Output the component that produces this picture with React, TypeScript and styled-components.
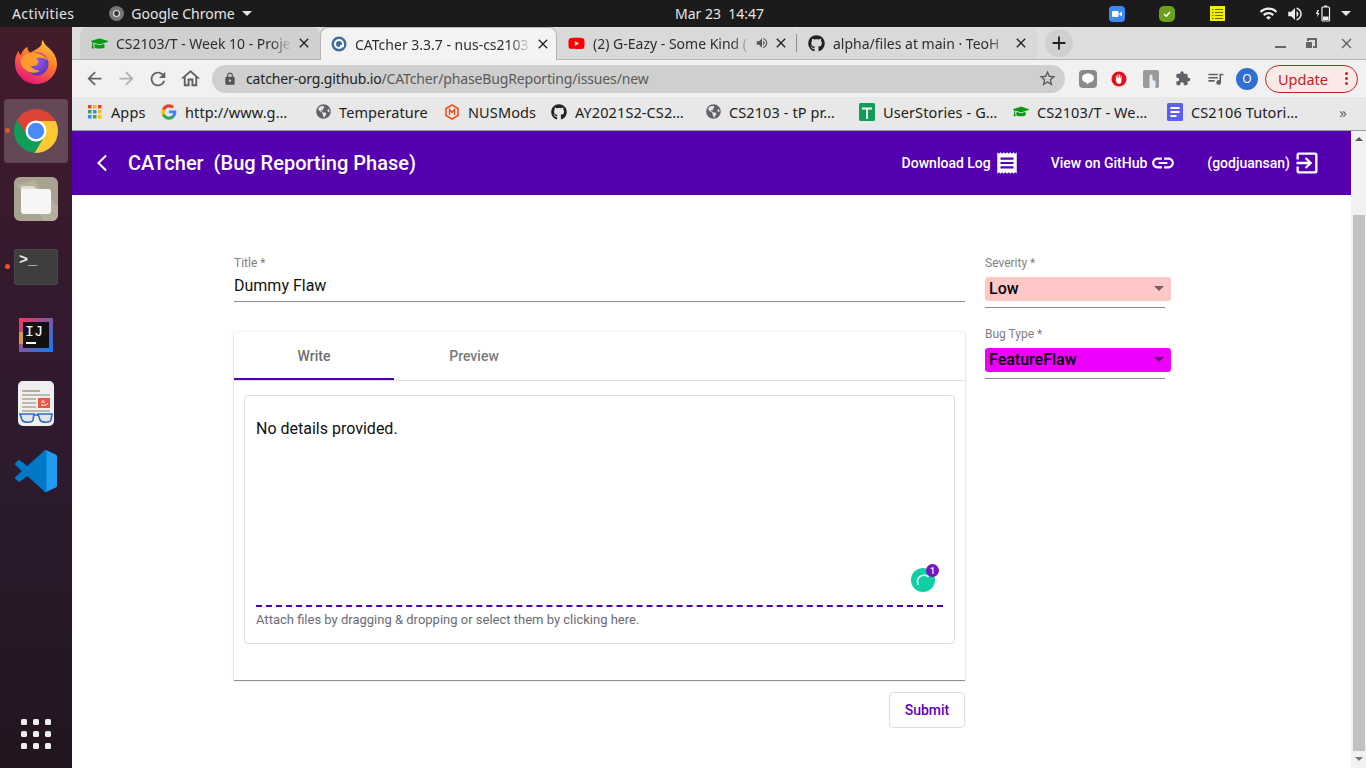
import styled, { createGlobalStyle } from 'styled-components'
import { FaGithub, FaGlobeAmericas, FaGraduationCap, FaYoutube } from 'react-icons/fa'
import {
  MdAdd,
  MdArrowBack,
  MdArrowBackIosNew,
  MdArrowDropDown,
  MdArrowForward,
  MdClose,
  MdExitToApp,
  MdExtension,
  MdLink,
  MdLock,
  MdOutlineHome,
  MdQueueMusic,
  MdReceipt,
  MdRefresh,
  MdStarBorder,
  MdVolumeUp,
  MdWifi,
} from 'react-icons/md'
import type { ReactNode } from 'react'

const PURPLE = '#5500b0'
const UI_FONT = '"Noto Sans", "Open Sans", sans-serif'
const APP_FONT = 'Roboto, "Liberation Sans", sans-serif'

const GlobalStyle = createGlobalStyle`
  html, body {
    margin: 0;
    padding: 0;
    height: 768px;
    overflow: hidden;
    background: #fff;
  }
  * { box-sizing: border-box; }
`

const Screen = styled.div`
  width: 1366px;
  height: 768px;
  display: flex;
  flex-direction: column;
  overflow: hidden;
  font-family: ${UI_FONT};
`

/* gnome top bar */
const TopBar = styled.div`
  height: 27px;
  flex: none;
  background: #1b1b1b;
  color: #e6e6e6;
  font-size: 14px;
  display: grid;
  grid-template-columns: 1fr auto 1fr;
  align-items: center;
  padding: 0 11px 0 12px;
`
const TopLeft = styled.div`
  display: flex;
  align-items: center;
`
const Activities = styled.span`
  letter-spacing: 0.4px;
`
const AppMenu = styled.div`
  display: flex;
  align-items: center;
  margin-left: 35px;
  gap: 7px;
`
const Clock = styled.div`
  white-space: pre;
  padding-left: 72px;
`
const Tray = styled.div`
  display: flex;
  align-items: center;
  justify-content: flex-end;
`
const TraySlot = styled.span<{ $w: number; $after?: number }>`
  width: ${p => p.$w}px;
  margin-right: ${p => p.$after ?? 0}px;
  display: flex;
  justify-content: center;
  align-items: center;
`
const Caret = styled.span`
  width: 0;
  height: 0;
  border-left: 5px solid transparent;
  border-right: 5px solid transparent;
  border-top: 5px solid #e6e6e6;
`

const Body = styled.div`
  flex: 1;
  display: flex;
  min-height: 0;
`

/* launcher */
const Dock = styled.div`
  width: 72px;
  flex: none;
  background: linear-gradient(180deg, #431c2b 0%, #34192f 35%, #2c1a2e 60%, #22151f 100%);
  display: flex;
  flex-direction: column;
  padding: 2px 0 19px;
`
const DockSlot = styled.div<{ $active?: boolean; $running?: boolean }>`
  position: relative;
  height: 64px;
  flex: none;
  display: flex;
  align-items: center;
  justify-content: center;
  margin: 2px 4px;
  border-radius: 4px;
  background: ${p => (p.$active ? 'rgba(255,255,255,0.2)' : 'transparent')};
  &::before {
    content: '';
    display: ${p => (p.$running ? 'block' : 'none')};
    position: absolute;
    left: 1px;
    top: 50%;
    margin-top: -3px;
    width: 5px;
    height: 5px;
    border-radius: 50%;
    background: #e95420;
  }
`
const AppGrid = styled.div`
  margin: auto auto 0;
  display: grid;
  grid-template-columns: repeat(3, 6px);
  gap: 6px;
`
const AppDot = styled.span`
  width: 6px;
  height: 6px;
  border-radius: 1.5px;
  background: #eee;
`

/* browser */
const Browser = styled.div`
  flex: 1;
  min-width: 0;
  display: flex;
  flex-direction: column;
`
const TabStrip = styled.div`
  height: 33px;
  flex: none;
  background: #dedede;
  display: flex;
  align-items: stretch;
  padding-left: 8px;
  border-bottom: 1px solid #b4b4b4;
`
const Tab = styled.div<{ $w: number; $tone: 'active' | 'hover' | 'plain'; $divider?: boolean }>`
  width: ${p => p.$w}px;
  height: ${p => (p.$tone === 'active' ? '33px' : '32px')};
  flex: none;
  display: flex;
  align-items: center;
  gap: 4px;
  padding: ${p => (p.$tone === 'active' ? '0 5px 0 9px' : '0 8px 0 11px')};
  font-size: 14px;
  color: #2e2e2e;
  border-radius: 8px 8px 0 0;
  position: relative;
  z-index: ${p => (p.$tone === 'active' ? 1 : 0)};
  background: ${p => (p.$tone === 'active' ? '#f3f3f3' : p.$tone === 'hover' ? '#d0d0d0' : '#d9d9d9')};
  border: ${p => (p.$tone === 'active' ? '1px solid #b4b4b4' : 'none')};
  border-bottom: none;
  &::after {
    content: '';
    display: ${p => (p.$divider ? 'block' : 'none')};
    position: absolute;
    right: 0;
    top: 7px;
    bottom: 7px;
    width: 1px;
    background: #8e8e8e;
  }
`
const TabIcon = styled.span`
  width: 17px;
  margin-right: 4px;
  flex: none;
  display: flex;
  justify-content: center;
`
const TabTitle = styled.span`
  flex: 1;
  min-width: 0;
  overflow: hidden;
  white-space: nowrap;
  -webkit-mask-image: linear-gradient(90deg, #000 88%, transparent);
  mask-image: linear-gradient(90deg, #000 88%, transparent);
`
const NewTab = styled.div`
  width: 28px;
  height: 28px;
  margin: 2px 0 0 8px;
  border-radius: 50%;
  background: #d0d0d0;
  display: flex;
  align-items: center;
  justify-content: center;
  color: #222;
`
const WindowControls = styled.div`
  margin-left: auto;
  display: flex;
  align-items: center;
  gap: 19px;
  padding-right: 11px;
  color: #5f6368;
`
const MinimizeBar = styled.span`
  width: 11px;
  height: 2px;
  margin-top: 7px;
  background: #666;
`
const RestoreBox = styled.span`
  position: relative;
  width: 10px;
  height: 10px;
  border: 2px solid #666;
  margin: 0 2px;
  &::after {
    content: '';
    position: absolute;
    left: -3px;
    top: 2px;
    width: 6px;
    height: 6px;
    background: #666;
    box-shadow: 0 0 0 1px #dedede;
  }
`

const Toolbar = styled.div`
  height: 37px;
  flex: none;
  background: #f1f1f1;
  display: flex;
  align-items: center;
  padding: 0 8px 0 6px;
  color: #5f6368;
`
const NavButton = styled.span<{ $faded?: boolean }>`
  width: 32px;
  display: flex;
  justify-content: center;
  color: ${p => (p.$faded ? '#b0b0b0' : '#5f6368')};
`
const Omnibox = styled.div`
  width: 853px;
  height: 28px;
  margin-left: 6px;
  border-radius: 14px;
  background: #cfcfcf;
  display: flex;
  align-items: center;
  padding: 0 8px 0 11px;
  font-size: 14px;
  color: #5a5a5a;
`
const Url = styled.span`
  margin-left: 9px;
  flex: 1;
  letter-spacing: -0.15px;
`
const UrlHost = styled.span`
  color: #222;
`
const ExtIcons = styled.div`
  display: flex;
  align-items: center;
`
const ExtSlot = styled.span<{ $w: number }>`
  width: ${p => p.$w}px;
  display: flex;
  justify-content: center;
`
const Avatar = styled.span`
  width: 22px;
  height: 22px;
  flex: none;
  border-radius: 50%;
  background: #2f6fd6;
  color: #fff;
  font-size: 12px;
  display: flex;
  align-items: center;
  justify-content: center;
`
const UpdatePill = styled.div`
  width: 93px;
  height: 28px;
  margin-left: 10px;
  flex: none;
  border: 1px solid #c5221f;
  border-radius: 14px;
  background: #fbe9e7;
  color: #c5221f;
  font-size: 14.5px;
  display: flex;
  align-items: center;
  justify-content: space-between;
  padding: 0 9px 0 12px;
`
const KebabDots = styled.span`
  display: grid;
  gap: 2px;
`
const KebabDot = styled.i`
  width: 3px;
  height: 3px;
  border-radius: 50%;
  background: #c5221f;
`

const BookmarkBar = styled.div`
  height: 34px;
  flex: none;
  background: #e8e8e8;
  border-bottom: 1px solid #9a9a9a;
  display: flex;
  align-items: center;
  padding: 0 0 4px 15px;
  font-size: 14.5px;
  color: #222;
`
const Bookmark = styled.div<{ $w: number }>`
  width: ${p => p.$w}px;
  flex: none;
  display: flex;
  align-items: center;
  gap: 8px;
  white-space: nowrap;
  letter-spacing: 0.1px;
`
const BookmarkIcon = styled.span`
  width: 16px;
  height: 16px;
  flex: none;
  display: flex;
  align-items: center;
  justify-content: center;
  color: #5f6368;
`
const Overflow = styled.span`
  margin-left: auto;
  padding-right: 19px;
  color: #666;
  font-size: 15px;
`

/* page */
const Page = styled.div`
  flex: 1;
  min-height: 0;
  display: flex;
  font-family: ${APP_FONT};
`
const PageMain = styled.div`
  flex: 1;
  min-width: 0;
  display: flex;
  flex-direction: column;
  background: #fff;
`
const AppHeader = styled.header`
  height: 64px;
  flex: none;
  background: ${PURPLE};
  color: #fff;
  display: flex;
  align-items: center;
  padding: 0 30px 0 20px;
`
const BackButton = styled.span`
  display: flex;
  width: 36px;
`
const AppTitle = styled.h1`
  margin: 0;
  font-size: 20px;
  font-weight: 500;
  white-space: pre;
`
const HeaderActions = styled.div`
  margin-left: auto;
  display: flex;
  align-items: center;
  gap: 31px;
`
const HeaderAction = styled.div`
  display: flex;
  align-items: center;
  gap: 3px;
  font-size: 14px;
  font-weight: 500;
`

const FormGrid = styled.div`
  display: flex;
  gap: 20px;
  padding: 61px 0 0 162px;
`
const LeftColumn = styled.div`
  width: 731px;
  flex: none;
  display: flex;
  flex-direction: column;
`
const RightColumn = styled.div`
  width: 186px;
  flex: none;
  display: flex;
  flex-direction: column;
  gap: 19px;
`
const FieldLabel = styled.div`
  font-size: 12px;
  line-height: 14px;
  color: #808080;
`
const TitleInput = styled.div`
  font-size: 16px;
  line-height: 19px;
  color: #111;
  margin-top: 6px;
  padding-bottom: 6px;
  border-bottom: 1px solid #8c8c8c;
`
const SelectField = styled.div`
  display: flex;
  flex-direction: column;
`
const SelectBox = styled.div<{ $bg: string }>`
  margin-top: 7px;
  height: 24px;
  border-radius: 3px;
  background: ${p => p.$bg};
  display: flex;
  align-items: center;
  justify-content: space-between;
  padding: 0 0 2px 4px;
  font-size: 16px;
  font-weight: 500;
  color: #000;
  svg {
    color: rgba(0, 0, 0, 0.54);
  }
`
const SelectLine = styled.div`
  width: 180px;
  height: 1px;
  margin-top: 6px;
  background: #8c8c8c;
`

const EditorCard = styled.section`
  margin-top: 30px;
  height: 348px;
  background: #fff;
  box-shadow: 0 1px 1px rgba(0, 0, 0, 0.45), 0 0 3px rgba(0, 0, 0, 0.12);
  border-radius: 2px 2px 0 0;
  display: flex;
  flex-direction: column;
`
const TabRow = styled.div`
  height: 49px;
  flex: none;
  display: flex;
  border-bottom: 1px solid #e0e0e0;
`
const EditorTab = styled.div<{ $active?: boolean }>`
  width: 160px;
  display: flex;
  align-items: center;
  justify-content: center;
  font-size: 14px;
  font-weight: 500;
  padding-top: 1px;
  color: ${p => (p.$active ? '#6f6f6f' : '#7a7a7a')};
  border-bottom: 2px solid ${p => (p.$active ? PURPLE : 'transparent')};
  height: 48px;
`
const EditorBody = styled.div`
  position: relative;
  margin: 14px 10px 0;
  height: 249px;
  border: 1px solid #e0e0e0;
  border-radius: 4px;
  padding: 0 11px;
  display: flex;
  flex-direction: column;
`
const Draft = styled.div`
  flex: none;
  height: 211px;
  padding-top: 23px;
  font-size: 16px;
  line-height: 19px;
  color: #111;
  border-bottom: 2px dashed ${PURPLE};
`
const AttachHint = styled.div`
  font-size: 13px;
  line-height: 15px;
  margin-top: 5px;
  color: #6b6b75;
`
const Grammarly = styled.span`
  position: absolute;
  right: 19px;
  bottom: 51px;
  width: 24px;
  height: 24px;
  border-radius: 50%;
  background: #0fd0a2;
  display: flex;
  align-items: center;
  justify-content: center;
`
const GrammarlyBadge = styled.span`
  position: absolute;
  right: -4px;
  top: -4px;
  width: 13px;
  height: 13px;
  border-radius: 50%;
  background: #7a12c4;
  color: #fff;
  font-size: 9px;
  font-weight: 500;
  display: flex;
  align-items: center;
  justify-content: center;
`
const SubmitRow = styled.div`
  display: flex;
  justify-content: flex-end;
  margin-top: 12px;
`
const SubmitButton = styled.button`
  width: 76px;
  height: 36px;
  background: #fff;
  border: 1px solid #dedede;
  border-radius: 4px;
  color: #5e00be;
  font-family: ${APP_FONT};
  font-size: 14px;
  font-weight: 500;
  padding: 0;
`

const ScrollTrack = styled.div`
  width: 15px;
  flex: none;
  background: #f1f1f1;
  display: flex;
  flex-direction: column;
  align-items: center;
  padding-top: 6px;
`
const ScrollThumb = styled.div`
  width: 12px;
  height: 536px;
  margin-top: 74px;
  background: #c1c1c1;
`
const ScrollArrow = styled.span<{ $down?: boolean }>`
  width: 0;
  height: 0;
  border-left: 4px solid transparent;
  border-right: 4px solid transparent;
  ${p => (p.$down ? 'border-top: 4px solid #7a7a7a; margin-top: 6px;' : 'border-bottom: 4px solid #5a5a5a;')}
`

function FirefoxLogo() {
  return (
    <svg width="44" height="46" viewBox="0 2 46 48">
      <defs>
        <linearGradient id="ffBody" x1="0.8" y1="0" x2="0.3" y2="1">
          <stop offset="0" stopColor="#ffd23c" />
          <stop offset="0.45" stopColor="#ff7a2b" />
          <stop offset="1" stopColor="#e3127d" />
        </linearGradient>
        <radialGradient id="ffGlobe" cx="0.5" cy="0.4" r="0.7">
          <stop offset="0" stopColor="#9a5cf0" />
          <stop offset="1" stopColor="#4e2fb0" />
        </radialGradient>
      </defs>
      <path d="M30 1c1 6 6 8 10 13 5 6 6 13 4 19-3 9-11 15-21 15C11 48 1 38 1 26c0-5 1-9 4-13 0 3 1 4 2 5 1-4 4-7 7-9 0 3 1 5 3 6 4-2 9-4 12-8-1-2 1-4 1-6z" fill="url(#ffBody)" />
      <circle cx="24" cy="27" r="12" fill="url(#ffGlobe)" />
      <path d="M7 22c4-6 12-8 19-6 4 1 8 4 9 7-4-3-9-3-12-2 2 1 3 3 2 5-1 3-5 4-8 3 2 3 6 5 10 5-4 3-11 3-15-1-4-3-6-7-5-11z" fill="#ff9a2e" />
    </svg>
  )
}

function ChromeLogo() {
  return (
    <svg width="44" height="44" viewBox="0 0 44 44">
      <defs>
        <clipPath id="chromeDisc">
          <circle cx="22" cy="22" r="22" />
        </clipPath>
      </defs>
      <g clipPath="url(#chromeDisc)">
        <polygon points="0,44 0,8 3,11 13.3,27 30.7,27 20.5,44" fill="#109d58" />
        <polygon points="22,12 44,12 44,44 20.5,44 30.7,27 22,22" fill="#fcc934" />
        <polygon points="22,12 44,12 44,0 0,0 0,8 3,11 13.3,27 22,22" fill="#db4437" />
      </g>
      <circle cx="22" cy="22" r="10.5" fill="#fff" />
      <circle cx="22" cy="22" r="8.2" fill="#4a8af4" />
    </svg>
  )
}

function FilesLogo() {
  return (
    <svg width="44" height="44" viewBox="0 0 44 44">
      <rect width="44" height="44" rx="6" fill="#a8a291" />
      <path d="M20 3 44 30V38a6 6 0 0 1-6 6H30L3 8z" fill="#b5af9f" />
      <path d="M7 12a3 3 0 0 1 3-3h9l4 3h11a3 3 0 0 1 3 3v19a3 3 0 0 1-3 3H10a3 3 0 0 1-3-3z" fill="#f7f6f4" />
      <path d="M7 12a3 3 0 0 1 3-3h9l4 3z" fill="#dfdcd6" />
    </svg>
  )
}

function TerminalLogo() {
  return (
    <svg width="44" height="36" viewBox="0 0 44 36">
      <rect width="44" height="36" rx="4" fill="#3e3e3e" stroke="#6a6a6a" strokeWidth="0.5" />
      <text x="5" y="15" fontFamily="Liberation Mono, monospace" fontSize="15" fill="#eee" fontWeight="700">{'>_'}</text>
    </svg>
  )
}

function IdeaLogo() {
  return (
    <svg width="34" height="34" viewBox="0 0 34 34">
      <defs>
        <linearGradient id="ijEdge" x1="0" y1="0" x2="1" y2="1">
          <stop offset="0" stopColor="#fe315d" />
          <stop offset="0.5" stopColor="#7c59a4" />
          <stop offset="1" stopColor="#087cfa" />
        </linearGradient>
      </defs>
      <rect width="34" height="34" fill="url(#ijEdge)" />
      <rect x="0" y="14" width="4" height="12" fill="#d59a3e" />
      <rect x="4" y="4" width="26" height="26" fill="#111" />
      <text x="6" y="18" fontFamily="Liberation Mono, monospace" fontSize="15" fill="#fff">IJ</text>
      <rect x="7" y="24" width="10" height="2" fill="#fff" />
    </svg>
  )
}

function ReaderLogo() {
  return (
    <svg width="36" height="45" viewBox="0 0 36 45">
      <rect width="36" height="45" rx="5" fill="#efefef" />
      <rect x="4" y="9" width="18" height="2" fill="#b6ae9c" />
      {[13, 17, 21, 25].map((y, i) => (
        <rect key={y} x="4" y={y} width={i === 0 ? 28 : 14} height="2" fill="#c0b9a8" />
      ))}
      <rect x="20" y="17" width="12" height="10" fill="#ee5544" />
      <path d="M23 24c3 1 6 0 7-2M24 22c-1-3 3-3 2 0" stroke="#fff" strokeWidth="1" fill="none" />
      <rect x="4" y="29" width="28" height="2" fill="#c0b9a8" />
      <path d="M2 33h14l-1 6c-1 3-9 3-11 0zM20 33h14l-1 6c-1 3-9 3-11 0z" fill="#e4e6ea" stroke="#2b6cc4" strokeWidth="1.6" />
      <path d="M16 34h4" stroke="#2b6cc4" strokeWidth="1.6" />
    </svg>
  )
}

function VsCodeLogo() {
  return (
    <svg width="42" height="42" viewBox="0 0 100 100">
      <path
        d="M70.9 99.3a6.2 6.2 0 0 0 5-.2L96.5 89.2A6.2 6.2 0 0 0 100 83.6V16.4a6.2 6.2 0 0 0-3.5-5.6L75.9.9a6.2 6.2 0 0 0-7.1 1.2L29.4 38 12.2 25a4.2 4.2 0 0 0-5.3.2L1.4 30.3a4.2 4.2 0 0 0 0 6.2L16.3 50 1.4 63.5a4.2 4.2 0 0 0 0 6.2l5.5 5a4.2 4.2 0 0 0 5.3.2L29.4 62l39.4 35.9a6.2 6.2 0 0 0 2.1 1.4zM75 27.2 45.1 50 75 72.8z"
        fill="#0078c8"
      />
      <path
        d="M68.8 2.1a6.2 6.2 0 0 1 7.1-1.2L96.5 10.8a6.2 6.2 0 0 1 3.5 5.6v67.2a6.2 6.2 0 0 1-3.5 5.6L75.9 99.1a6.2 6.2 0 0 1-7.1-1.2C72 101 75 99 75 96V4C75 1 72-1 68.8 2.1z"
        fill="#1f9cf0"
      />
    </svg>
  )
}

function CatcherIcon() {
  return (
    <svg width="16" height="16" viewBox="0 0 16 16">
      <circle cx="8" cy="8" r="7.5" fill="#3c6d9c" />
      <circle cx="8" cy="8" r="4" fill="none" stroke="#fff" strokeWidth="2" />
      <rect x="9" y="9" width="4" height="2" fill="#fff" />
    </svg>
  )
}

function GoogleIcon() {
  return (
    <svg width="16" height="16" viewBox="0 0 48 48">
      <path fill="#4285f4" d="M46 24c0-1.6-.1-3.100-.4-4.500H24v8.500h12.400c-.5 2.900-2.100 5.300-4.600 7v5.800h7.400C43.500 36.800 46 30.900 46 24z" />
      <path fill="#34a853" d="M24 47c6.200 0 11.400-2 15.200-5.700l-7.400-5.800c-2 1.400-4.700 2.200-7.800 2.200-6 0-11-4-12.800-9.500H3.500v6C7.300 41.700 15 47 24 47z" />
      <path fill="#fbbc05" d="M11.200 28.200c-.5-1.400-.7-2.800-.7-4.200s.3-2.900.7-4.200v-6H3.500C2 16.800 1 20.300 1 24s.9 7.200 2.500 10.200z" />
      <path fill="#ea4335" d="M24 10.300c3.400 0 6.400 1.200 8.800 3.400l6.500-6.500C35.400 3.600 30.200 1 24 1 15 1 7.300 6.300 3.500 13.800l7.700 6C13 14.300 18 10.300 24 10.300z" />
    </svg>
  )
}

function AppsIcon() {
  const colors = ['#ea4335', '#fbbc05', '#ea4335', '#34a853', '#4285f4', '#fbbc05', '#4285f4', '#34a853', '#fbbc05']
  return (
    <svg width="14" height="14" viewBox="0 0 14 14">
      {colors.map((c, i) => (
        <rect key={i} x={(i % 3) * 5} y={Math.floor(i / 3) * 5} width="3.500" height="3.500" fill={c} />
      ))}
    </svg>
  )
}

function NusModsIcon() {
  return (
    <svg width="16" height="16" viewBox="0 0 16 16">
      <path d="M8 1 14 4.500V11.500L8 15 2 11.500V4.500z" fill="none" stroke="#f4511e" strokeWidth="1.6" />
      <path d="M5.500 11V5.500L8 8.500l2.500-3V11" fill="none" stroke="#f4511e" strokeWidth="1.4" />
    </svg>
  )
}

function SheetsIcon() {
  return (
    <svg width="16" height="18" viewBox="0 0 16 18">
      <rect width="16" height="18" rx="1.500" fill="#0f9d58" />
      <path d="M3 5.500h10M8 5.500V16" stroke="#fff" strokeWidth="1.800" />
    </svg>
  )
}

function DocsIcon() {
  return (
    <svg width="16" height="18" viewBox="0 0 16 18">
      <rect width="16" height="18" rx="1.500" fill="#5c5ff0" />
      <path d="M3.500 5h9M3.500 9h9M3.500 13h6" stroke="#fff" strokeWidth="1.800" />
    </svg>
  )
}

function LineIcon() {
  return (
    <svg width="18" height="18" viewBox="0 0 18 18">
      <rect width="18" height="18" rx="4" fill="#8a8a8a" />
      <path d="M9 3.500c-3.300 0-6 2-6 4.700 0 2.400 2 4.300 4.800 4.600l.2 1.700 2.500-1.900c2.600-.7 4.500-2.400 4.500-4.400 0-2.700-2.700-4.700-6-4.700z" fill="#fff" />
    </svg>
  )
}

function StopHandIcon() {
  return (
    <svg width="18" height="18" viewBox="0 0 18 18">
      <circle cx="9" cy="9" r="8.500" fill="#e2101a" />
      <path d="M5.500 8V5.500h1V8h.7V4h1.100v4H9V4h1.100v4h.7V5h1v6.500c0 2-1.300 3-2.800 3S6.500 13.500 5.500 11z" fill="#fff" />
    </svg>
  )
}

function TouchIcon() {
  return (
    <svg width="16" height="18" viewBox="0 0 16 18">
      <rect width="16" height="18" rx="2" fill="#9a9a9a" />
      <path d="M6.500 18V6a1.500 1.500 0 0 1 3 0v4l3 1v7z" fill="#e8eef5" />
    </svg>
  )
}

function ZoomTray() {
  return (
    <svg width="16" height="16" viewBox="0 0 16 16">
      <rect width="16" height="16" rx="4" fill="#3d8af7" />
      <rect x="3" y="5" width="6.500" height="6" rx="1" fill="#fff" />
      <path d="M10.200 7.500 13 5.500v5l-2.800-2z" fill="#fff" />
    </svg>
  )
}

function ShieldTray() {
  return (
    <svg width="16" height="16" viewBox="0 0 16 16">
      <rect width="16" height="16" rx="5" fill="#6ba01f" />
      <path d="M5 8l2.200 2.200L11 6" fill="none" stroke="#fff" strokeWidth="1.500" />
    </svg>
  )
}

function NotesTray() {
  return (
    <svg width="15" height="15" viewBox="0 0 15 15">
      <rect width="15" height="15" fill="#f3ee00" />
      <path d="M2 3.500h1.500M5 3.500h8M2 6.500h1.500M5 6.500h8M2 9.500h1.500M5 9.500h8M2 12.500h1.500M5 12.500h8" stroke="#6a6a00" strokeWidth="1" />
    </svg>
  )
}

function BatteryTray() {
  return (
    <svg width="16" height="17" viewBox="0 0 16 17">
      <path d="M2.500 5 .8 9h1.800L2 12.500 4.500 8H2.800L4 5z" fill="#eee" />
      <rect x="7" y="2" width="7.500" height="14" rx="1" fill="none" stroke="#eee" strokeWidth="1.200" />
      <rect x="9.200" y=".5" width="3" height="1.500" fill="#eee" />
      <rect x="8" y="11.500" width="5.500" height="3.500" fill="#eee" />
    </svg>
  )
}

function ChromeMono() {
  return (
    <svg width="15" height="15" viewBox="0 0 15 15">
      <circle cx="7.500" cy="7.500" r="7.500" fill="#777" />
      <circle cx="7.500" cy="7.500" r="3" fill="#333" stroke="#ddd" strokeWidth="1.200" />
    </svg>
  )
}

function GrammarlyMark() {
  return (
    <svg width="18" height="18" viewBox="0 0 18 18">
      <path d="M4 13a6.500 6.500 0 0 1 10-7.500" fill="none" stroke="#d8fff4" strokeWidth="1.700" strokeLinecap="round" />
    </svg>
  )
}

const dockApps: { key: string; logo: ReactNode; active?: boolean; running?: boolean }[] = [
  { key: 'firefox', logo: <FirefoxLogo /> },
  { key: 'chrome', logo: <ChromeLogo />, active: true, running: true },
  { key: 'files', logo: <FilesLogo /> },
  { key: 'terminal', logo: <TerminalLogo />, running: true },
  { key: 'idea', logo: <IdeaLogo /> },
  { key: 'reader', logo: <ReaderLogo /> },
  { key: 'vscode', logo: <VsCodeLogo /> },
]

const tabs: { title: string; icon: ReactNode; w: number; tone: 'active' | 'hover' | 'plain'; audio?: boolean; divider?: boolean }[] = [
  { title: 'CS2103/T - Week 10 - Proje', icon: <FaGraduationCap size={17} color="#0a9a16" />, w: 240, tone: 'hover' },
  { title: 'CATcher 3.3.7 - nus-cs2103', icon: <CatcherIcon />, w: 237, tone: 'active' },
  { title: '(2) G-Eazy - Some Kind (', icon: <FaYoutube size={17} color="#f00" />, w: 240, tone: 'plain', audio: true, divider: true },
  { title: 'alpha/files at main · TeoH', icon: <FaGithub size={17} color="#222" />, w: 240, tone: 'plain' },
]

const bookmarks: { label: string; icon: ReactNode; w: number }[] = [
  { label: 'Apps', icon: <AppsIcon />, w: 74 },
  { label: 'http://www.g…', icon: <GoogleIcon />, w: 154 },
  { label: 'Temperature', icon: <FaGlobeAmericas size={15} />, w: 129 },
  { label: 'NUSMods', icon: <NusModsIcon />, w: 107 },
  { label: 'AY2021S2-CS2…', icon: <FaGithub size={16} color="#222" />, w: 154 },
  { label: 'CS2103 - tP pr…', icon: <FaGlobeAmericas size={15} />, w: 154 },
  { label: 'UserStories - G…', icon: <SheetsIcon />, w: 154 },
  { label: 'CS2103/T - We…', icon: <FaGraduationCap size={17} color="#0a9a16" />, w: 154 },
  { label: 'CS2106 Tutori…', icon: <DocsIcon />, w: 140 },
]

export default function App() {
  return (
    <Screen>
      <GlobalStyle />
      <TopBar>
        <TopLeft>
          <Activities>Activities</Activities>
          <AppMenu>
            <ChromeMono />
            <span>Google Chrome</span>
            <Caret />
          </AppMenu>
        </TopLeft>
        <Clock>Mar 23  14:47</Clock>
        <Tray>
          <TraySlot $w={50}><ZoomTray /></TraySlot>
          <TraySlot $w={50}><ShieldTray /></TraySlot>
          <TraySlot $w={50} $after={13}><NotesTray /></TraySlot>
          <TraySlot $w={26}><MdWifi size={19} color="#eee" /></TraySlot>
          <TraySlot $w={28}><MdVolumeUp size={18} color="#eee" /></TraySlot>
          <TraySlot $w={28}><BatteryTray /></TraySlot>
          <TraySlot $w={18}><Caret /></TraySlot>
        </Tray>
      </TopBar>
      <Body>
        <Dock>
          {dockApps.map(app => (
            <DockSlot key={app.key} $active={app.active} $running={app.running}>
              {app.logo}
            </DockSlot>
          ))}
          <AppGrid>
            {Array.from({ length: 9 }, (_, i) => <AppDot key={i} />)}
          </AppGrid>
        </Dock>
        <Browser>
          <TabStrip>
            {tabs.map(tab => (
              <Tab key={tab.title} $w={tab.w} $tone={tab.tone} $divider={tab.divider}>
                <TabIcon>{tab.icon}</TabIcon>
                <TabTitle>{tab.title}</TabTitle>
                {tab.audio && <MdVolumeUp size={14} color="#555" />}
                <MdClose size={16} color="#222" />
              </Tab>
            ))}
            <NewTab><MdAdd size={22} /></NewTab>
            <WindowControls>
              <MinimizeBar />
              <RestoreBox />
              <MdClose size={17} />
            </WindowControls>
          </TabStrip>
          <Toolbar>
            <NavButton><MdArrowBack size={21} /></NavButton>
            <NavButton $faded><MdArrowForward size={21} /></NavButton>
            <NavButton><MdRefresh size={22} /></NavButton>
            <NavButton><MdOutlineHome size={23} /></NavButton>
            <Omnibox>
              <MdLock size={14} color="#555" />
              <Url><UrlHost>catcher-org.github.io</UrlHost>/CATcher/phaseBugReporting/issues/new</Url>
              <MdStarBorder size={19} color="#555" />
            </Omnibox>
            <ExtIcons>
              <ExtSlot $w={46}><LineIcon /></ExtSlot>
              <ExtSlot $w={16}><StopHandIcon /></ExtSlot>
              <ExtSlot $w={48}><TouchIcon /></ExtSlot>
              <ExtSlot $w={16}><MdExtension size={19} /></ExtSlot>
              <ExtSlot $w={48}><MdQueueMusic size={19} /></ExtSlot>
              <ExtSlot $w={16}><Avatar>O</Avatar></ExtSlot>
            </ExtIcons>
            <UpdatePill>
              <span>Update</span>
              <KebabDots><KebabDot /><KebabDot /><KebabDot /></KebabDots>
            </UpdatePill>
          </Toolbar>
          <BookmarkBar>
            {bookmarks.map(b => (
              <Bookmark key={b.label} $w={b.w}>
                <BookmarkIcon>{b.icon}</BookmarkIcon>
                <span>{b.label}</span>
              </Bookmark>
            ))}
            <Overflow>»</Overflow>
          </BookmarkBar>
          <Page>
            <PageMain>
              <AppHeader>
                <BackButton><MdArrowBackIosNew size={20} /></BackButton>
                <AppTitle>CATcher  (Bug Reporting Phase)</AppTitle>
                <HeaderActions>
                  <HeaderAction>Download Log <MdReceipt size={26} /></HeaderAction>
                  <HeaderAction>View on GitHub <MdLink size={26} /></HeaderAction>
                  <HeaderAction>(godjuansan) <MdExitToApp size={28} /></HeaderAction>
                </HeaderActions>
              </AppHeader>
              <FormGrid>
                <LeftColumn>
                  <FieldLabel>Title *</FieldLabel>
                  <TitleInput>Dummy Flaw</TitleInput>
                  <EditorCard>
                    <TabRow>
                      <EditorTab $active>Write</EditorTab>
                      <EditorTab>Preview</EditorTab>
                    </TabRow>
                    <EditorBody>
                      <Draft>No details provided.</Draft>
                      <AttachHint>Attach files by dragging &amp; dropping or select them by clicking here.</AttachHint>
                      <Grammarly>
                        <GrammarlyMark />
                        <GrammarlyBadge>1</GrammarlyBadge>
                      </Grammarly>
                    </EditorBody>
                  </EditorCard>
                  <SubmitRow>
                    <SubmitButton>Submit</SubmitButton>
                  </SubmitRow>
                </LeftColumn>
                <RightColumn>
                  <SelectField>
                    <FieldLabel>Severity *</FieldLabel>
                    <SelectBox $bg="#ffc8c8">Low<MdArrowDropDown size={24} /></SelectBox>
                    <SelectLine />
                  </SelectField>
                  <SelectField>
                    <FieldLabel>Bug Type *</FieldLabel>
                    <SelectBox $bg="#ee00ff">FeatureFlaw<MdArrowDropDown size={24} /></SelectBox>
                    <SelectLine />
                  </SelectField>
                </RightColumn>
              </FormGrid>
            </PageMain>
            <ScrollTrack>
              <ScrollArrow />
              <ScrollThumb />
              <ScrollArrow $down />
            </ScrollTrack>
          </Page>
        </Browser>
      </Body>
    </Screen>
  )
}
